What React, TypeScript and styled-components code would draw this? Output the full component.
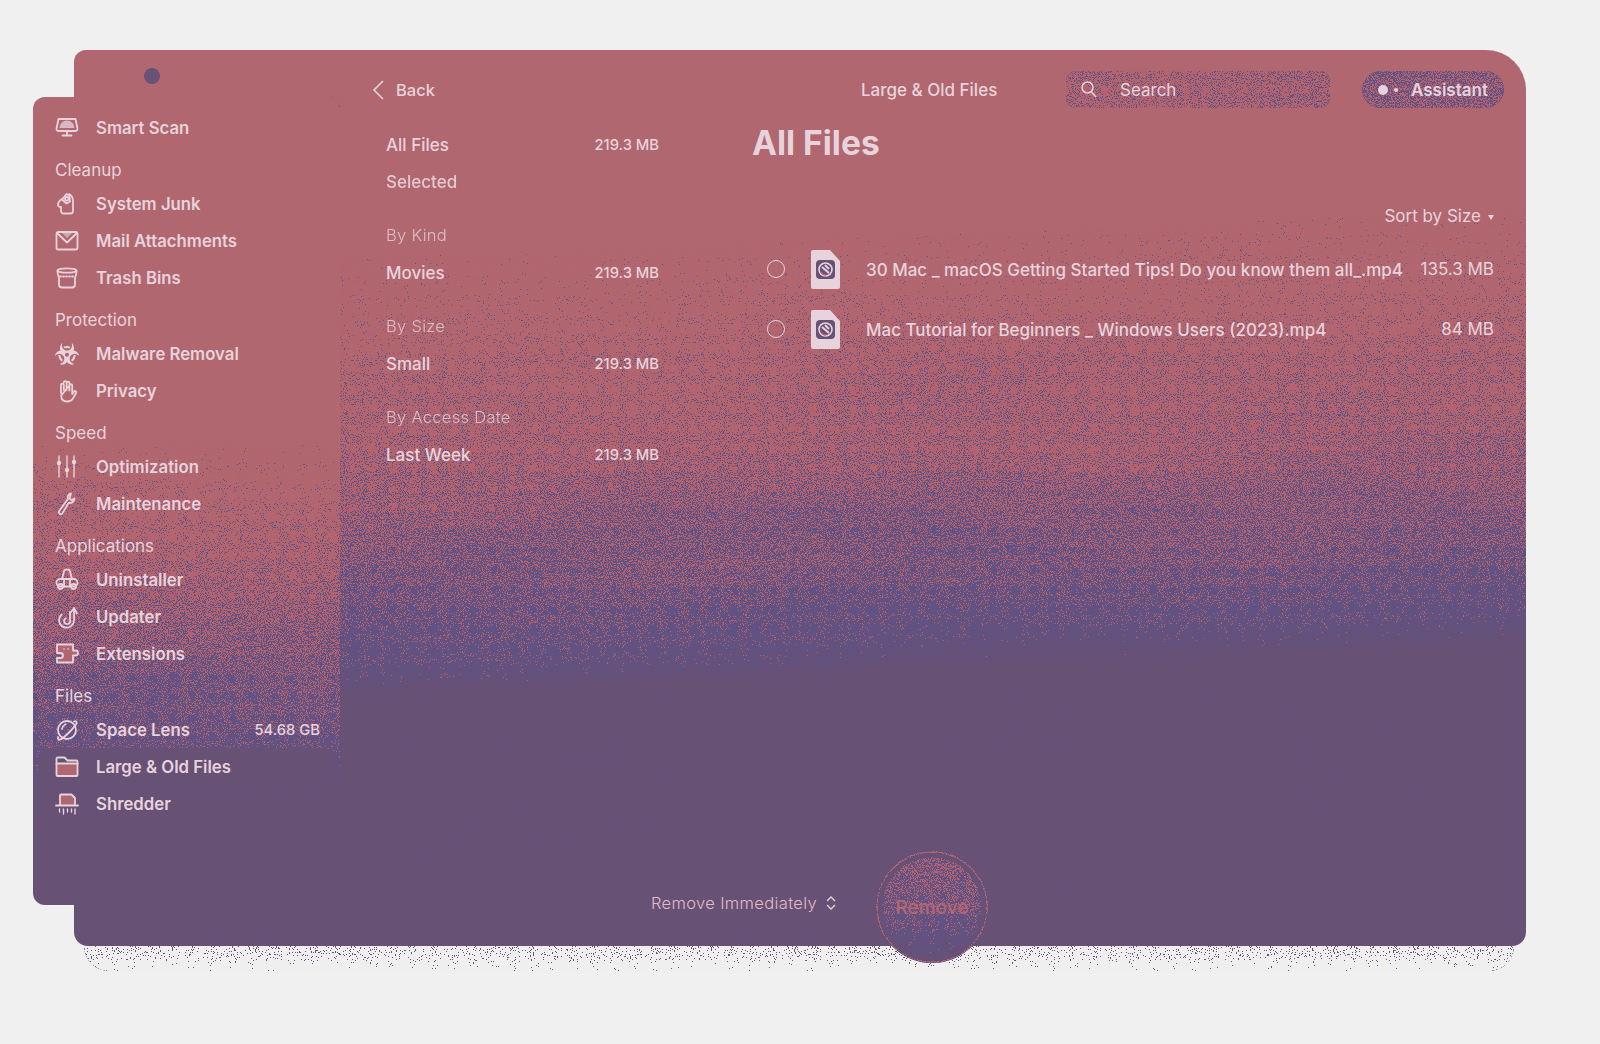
import { ReactNode } from 'react';
import styled, { createGlobalStyle, css } from 'styled-components';
import { FaBiohazard } from 'react-icons/fa';

const PINK = '#b16771';
const PURPLE = '#675175';
const LIGHT = '#e8d3dc';

const GlobalStyle = createGlobalStyle`
  html, body {
    margin: 0;
    background: #f0f0f0;
    font-family: Inter, "Noto Sans", "Liberation Sans", sans-serif;
    color: ${LIGHT};
  }
`;

// white ends up pink, black ends up purple, greys become a pixel dither of the two
const dithered = css`
  content: '';
  position: absolute;
  z-index: -1;
  filter: url(#dither);
`;

const Page = styled.div`
  width: 1600px;
  height: 1044px;
  padding: 50px 74px 0;
  box-sizing: border-box;
  overflow: hidden;
`;

const Window = styled.div`
  position: relative;
  isolation: isolate;
  display: flex;
  height: 896px;
  border-radius: 12px 40px 14px 14px;

  &::before {
    ${dithered}
    inset: 0;
    border-radius: inherit;
    background: linear-gradient(
      177.6deg,
      #fff 0,
      #fff 23%,
      #c8c8c8 23.1%,
      #a8a8a8 34%,
      #909090 46%,
      #707070 58%,
      #505050 65%,
      #343434 67.5%,
      #000 69%,
      #000 100%
    );
  }

  &::after {
    content: '';
    position: absolute;
    z-index: -2;
    left: 10px;
    right: 12px;
    top: 100%;
    height: 25px;
    border-radius: 0 0 26px 26px;
    background: linear-gradient(#a0a0a0, #c0c0c0);
    filter: url(#ditherShadow);
  }
`;

const TrafficDot = styled.span`
  position: absolute;
  left: 70px;
  top: 18px;
  width: 16px;
  height: 16px;
  border-radius: 50%;
  background: ${PURPLE};
`;

const Sidebar = styled.nav`
  position: relative;
  isolation: isolate;
  flex: none;
  width: 307px;
  margin: 47px 0 41px -41px;
  padding-top: 12px;
  box-sizing: border-box;
  border-radius: 12px;

  &::before {
    ${dithered}
    inset: 0;
    border-radius: inherit;
    background: linear-gradient(
      #fff 0,
      #fff 43%,
      #c8c8c8 43.1%,
      #a4a4a4 52%,
      #868686 64%,
      #6c6c6c 76%,
      #505050 82%,
      #343434 84%,
      #000 86%,
      #000 100%
    );
  }
`;

const GroupLabel = styled.div`
  height: 31px;
  margin-top: 8px;
  padding-left: 22px;
  font-size: 17px;
  line-height: 33px;
  font-weight: 400;
`;

const NavRow = styled.div<{ $selected?: boolean }>`
  display: flex;
  align-items: center;
  height: 37px;
  margin: 0 5px;
  padding: 0 15px 0 17px;
  border-radius: 10px;
  font-size: 16.75px;
  font-weight: 600;
  background: ${(p) => (p.$selected ? PURPLE : 'transparent')};
`;

const NavIcon = styled.svg`
  flex: none;
  width: 24px;
  height: 24px;
  margin-right: 17px;
  fill: none;
  stroke: ${LIGHT};
  stroke-width: 1.8;
  stroke-linecap: round;
  stroke-linejoin: round;
`;

const HazardIcon = styled(FaBiohazard)`
  flex: none;
  width: 24px;
  height: 24px;
  margin-right: 17px;
  color: ${LIGHT};
`;

const NavBadge = styled.span`
  margin-left: auto;
  font-size: 14.75px;
  font-weight: 500;
`;

const Middle = styled.div`
  flex: none;
  width: 393px;
  padding: 0 0 0 46px;
  box-sizing: border-box;
`;

const BackLink = styled.div`
  display: flex;
  align-items: center;
  gap: 10px;
  height: 37px;
  margin: 21px 0 0 -14px;
  font-size: 16.5px;
  font-weight: 500;
`;

const FilterList = styled.div`
  margin-top: 18px;
  width: 273px;
`;

const FilterRow = styled.div<{ $muted?: boolean }>`
  display: flex;
  justify-content: space-between;
  align-items: center;
  height: 37px;
  font-size: 17px;
  font-weight: 500;
  opacity: ${(p) => (p.$muted ? 0.9 : 1)};
`;

const FilterHeading = styled.div`
  height: 37px;
  margin-top: 17px;
  font-size: 16.5px;
  line-height: 37px;
  font-weight: 300;
  letter-spacing: 0.3px;
  opacity: 0.8;
`;

const FilterSize = styled.span`
  font-size: 14.75px;
  font-weight: 500;
`;

const Content = styled.main`
  flex: 1;
  min-width: 0;
  padding-right: 32px;
  display: flex;
  flex-direction: column;
`;

const TopBar = styled.header`
  display: flex;
  align-items: center;
  height: 37px;
  margin-top: 21px;
`;

const TopTitle = styled.div`
  flex: none;
  width: 137px;
  margin-left: 128px;
  font-size: 17px;
  font-weight: 500;
  white-space: nowrap;
`;

const SearchBox = styled.div`
  position: relative;
  isolation: isolate;
  flex: none;
  display: flex;
  align-items: center;
  gap: 23px;
  width: 264px;
  height: 37px;
  margin-left: 68px;
  padding-left: 15px;
  box-sizing: border-box;
  border-radius: 10px;
  font-size: 17px;
  font-weight: 400;

  &::before {
    ${dithered}
    inset: 0;
    border-radius: inherit;
    background: #909090;
  }
`;

const AssistantPill = styled.div`
  position: relative;
  isolation: isolate;
  flex: none;
  display: flex;
  align-items: center;
  width: 142px;
  height: 37px;
  margin-left: 32px;
  padding-left: 16px;
  box-sizing: border-box;
  border-radius: 19px;
  font-size: 17px;
  font-weight: 600;

  &::before {
    ${dithered}
    inset: 0;
    border-radius: inherit;
    background: #787878;
  }
`;

const AssistantDot = styled.span<{ $size: number; $gap: number }>`
  width: ${(p) => p.$size}px;
  height: ${(p) => p.$size}px;
  margin-right: ${(p) => p.$gap}px;
  border-radius: 50%;
  background: ${LIGHT};
`;

const Title = styled.h1`
  margin: 14px 0 0 19px;
  height: 42px;
  font-size: 33.5px;
  line-height: 42px;
  font-weight: 700;
`;

const SortRow = styled.div`
  display: flex;
  justify-content: flex-end;
  align-items: center;
  gap: 7px;
  margin-top: 40px;
  height: 24px;
  font-size: 17px;
  font-weight: 400;
`;

const Caret = styled.span`
  width: 0;
  height: 0;
  margin-top: 2px;
  border-left: 3px solid transparent;
  border-right: 3px solid transparent;
  border-top: 5px solid ${LIGHT};
`;

const FileList = styled.div`
  margin-top: 11px;
`;

const FileRow = styled.div`
  display: flex;
  align-items: center;
  height: 60px;
  margin-left: 34px;
`;

const Radio = styled.span`
  flex: none;
  width: 16px;
  height: 16px;
  border: 1.5px solid ${LIGHT};
  border-radius: 50%;
`;

const FileIcon = styled.svg`
  flex: none;
  width: 30px;
  height: 39px;
  margin: 0 25px 0 26px;
`;

const FileName = styled.span`
  flex: 1;
  min-width: 0;
  font-size: 17px;
  font-weight: 500;
  white-space: nowrap;
  margin-top: 2px;
`;

const FileSize = styled.span`
  flex: none;
  font-size: 17px;
  font-weight: 400;
`;

const Footer = styled.div`
  margin-top: auto;
  display: flex;
  align-items: center;
  height: 112px;
  margin-bottom: -17px;
  margin-left: -82px;
`;

const ModeSelect = styled.div`
  display: flex;
  align-items: center;
  gap: 9px;
  margin-top: -8px;
  font-size: 16.5px;
  font-weight: 300;
  letter-spacing: 0.35px;
  color: #e2bcc4;
`;

const RemoveButton = styled.div`
  position: relative;
  isolation: isolate;
  display: flex;
  align-items: center;
  justify-content: center;
  width: 112px;
  height: 112px;
  margin-left: 40px;
  border-radius: 50%;
  background: ${PURPLE};
  color: ${PINK};
  font-size: 19px;
  font-weight: 500;

  &::before {
    ${dithered}
    inset: 6px;
    border-radius: 50%;
    background: linear-gradient(#787878, #686868 50%, #404040 92%);
  }

  &::after {
    ${dithered}
    inset: 0;
    border-radius: 50%;
    border: 2px solid #8c8c8c;
  }
`;

function Icon({ children }: { children: ReactNode }) {
  return <NavIcon viewBox="0 0 24 24">{children}</NavIcon>;
}

const filledPink = { fill: PINK };
const filledLight = { fill: LIGHT, stroke: 'none' };

type NavItem = { label: string; icon: ReactNode; badge?: string; selected?: boolean };
type NavGroup = { title?: string; items: NavItem[] };

const groups: NavGroup[] = [
  {
    items: [
      {
        label: 'Smart Scan',
        icon: (
          <Icon>
            <path d="M3.500 3h17l2 9.500a2 2 0 0 1-2 2.500H3.500a2 2 0 0 1-2-2.500z" />
            <path d="M4.500 12a7.500 7.500 0 0 1 15 0z" style={filledLight} opacity={0.75} />
            <path d="M12 15v3.500M7.500 19.500h9" />
          </Icon>
        ),
      },
    ],
  },
  {
    title: 'Cleanup',
    items: [
      {
        label: 'System Junk',
        icon: (
          <Icon>
            <path d="M7 7C4.800 8.500 2.800 10.500 3 13c.1 1.300 1.500 2 3 2v4A2.500 2.500 0 0 0 8.500 21.500h7A2.500 2.500 0 0 0 18 19V9c0-3-1-5.500-4-7" />
            <path d="M7 7.500 11.500 2l3 2 .5 5.500-3.500 2z" />
            <circle cx="11.800" cy="6.800" r="1.800" />
          </Icon>
        ),
      },
      {
        label: 'Mail Attachments',
        icon: (
          <Icon>
            <rect x="1.500" y="3" width="21" height="17.500" rx="1.500" />
            <path d="m2 4 10 9.500L22 4" />
            <path d="M7 4h10l-5 5z" style={filledLight} opacity={0.6} />
          </Icon>
        ),
      },
      {
        label: 'Trash Bins',
        icon: (
          <Icon>
            <ellipse cx="12" cy="4.500" rx="9.500" ry="2.200" />
            <path d="M2.500 5c0 3 .5 5 1.500 6.500v7A3 3 0 0 0 7 21.500h10a3 3 0 0 0 3-3v-7c1-1.500 1.500-3.500 1.500-6.500" />
            <path d="M5 10.500h14" strokeDasharray="1 2" />
          </Icon>
        ),
      },
    ],
  },
  {
    title: 'Protection',
    items: [
      {
        label: 'Malware Removal',
        icon: <HazardIcon />,
      },
      {
        label: 'Privacy',
        icon: (
          <Icon>
            <path d="M6 14V6a1.400 1.400 0 0 1 2.800 0v5m0-7.500a1.400 1.400 0 0 1 2.800 0v7.500m0-7a1.400 1.400 0 0 1 2.800 0v7.500m0-5a1.400 1.400 0 0 1 2.800 0V15l1.800-2.500c1.200-1.200 2.700 0 2 1.500l-3 5.500c-1.500 2.300-3.500 3-6 3-4 0-5.800-2.500-5.800-6z" />
          </Icon>
        ),
      },
    ],
  },
  {
    title: 'Speed',
    items: [
      {
        label: 'Optimization',
        icon: (
          <Icon>
            <path d="M4 1v21M12 1v21M19 1v21" strokeWidth={1.400} />
            <circle cx="4" cy="8" r="2.200" style={filledLight} />
            <circle cx="12" cy="15" r="2.200" style={filledLight} />
            <circle cx="19" cy="7" r="2.200" style={filledLight} />
          </Icon>
        ),
      },
      {
        label: 'Maintenance',
        icon: (
          <Icon>
            <path d="M16 1.500c-2.500.5-4 3-3 5.500L4.500 18.500c-1 1.500-.8 2.800.2 3.400 1 .6 2.200.2 3-1l5.800-9.900c3 .2 5.500-1.500 6-4.500l-3 1.500-2-1.500z" />
          </Icon>
        ),
      },
    ],
  },
  {
    title: 'Applications',
    items: [
      {
        label: 'Uninstaller',
        icon: (
          <Icon>
            <path d="M9 3.500a3 2 0 0 1 6 0l2 7.500H7z" />
            <rect x="1.500" y="11" width="21" height="7.500" rx="3.700" />
            <circle cx="5.500" cy="18.500" r="2.500" />
            <circle cx="18.500" cy="18.500" r="2.500" />
            <path d="M9 11v7.500M15 11v7.500" />
          </Icon>
        ),
      },
      {
        label: 'Updater',
        icon: (
          <Icon>
            <path d="M6.500 9.500A7.500 7.500 0 1 0 19 14V5" />
            <path d="m15 8.500 4-5.500 3 5.500" />
            <path d="M10.500 13.500a3 3 0 1 0 4.500 1.500V7" />
          </Icon>
        ),
      },
      {
        label: 'Extensions',
        icon: (
          <Icon>
            <path d="M2 2.500h16v6h2.500a2.500 2.500 0 0 1 0 5H18v7H2V16h3.500a2.500 2.500 0 0 0 0-5H2z" style={filledPink} />
            <circle cx="9" cy="7" r="0.800" style={filledLight} />
            <circle cx="13" cy="7" r="0.800" style={filledLight} />
          </Icon>
        ),
      },
    ],
  },
  {
    title: 'Files',
    items: [
      {
        label: 'Space Lens',
        badge: '54.68 GB',
        icon: (
          <Icon>
            <circle cx="12" cy="12" r="9" />
            <path d="M19 3.500c2-1 3 0 2.500 2C19 10 10 19 5.500 21.500c-2 .8-3-.5-2.500-2.500" />
            <path d="M7 11a6 6 0 0 1 5-5" strokeDasharray="1 1.500" />
          </Icon>
        ),
      },
      {
        label: 'Large & Old Files',
        selected: true,
        icon: (
          <Icon>
            <path d="M1.500 6V3.500a1 1 0 0 1 1-1h7l3 3h9a1 1 0 0 1 1 1V9H1.500z" />
            <path d="M1.500 8.500h21V20a1 1 0 0 1-1 1h-19a1 1 0 0 1-1-1z" style={filledPink} />
          </Icon>
        ),
      },
      {
        label: 'Shredder',
        icon: (
          <Icon>
            <path d="M5 13V3.500a1 1 0 0 1 1-1h10.500L20 6v7" style={filledPink} />
            <path d="M1 13.500h22" />
            <path d="M4.500 17v3M8.500 17v5M12.500 17v3M16.500 17v3M20 17v5" strokeWidth={1.400} />
          </Icon>
        ),
      },
    ],
  },
];

const files = [
  { name: '30 Mac _ macOS Getting Started Tips! Do you know them all_.mp4', size: '135.3 MB' },
  { name: 'Mac Tutorial for Beginners _ Windows Users (2023).mp4', size: '84 MB' },
];

function MovieFile() {
  return (
    <FileIcon viewBox="0 0 30 39">
      <path d="M2 0h17l10 11v26a2 2 0 0 1-2 2H2a2 2 0 0 1-2-2V2a2 2 0 0 1 2-2z" fill={LIGHT} />
      <rect x="5" y="10" width="19" height="19" rx="4" fill={PURPLE} />
      <circle cx="14.500" cy="19.500" r="6.500" fill="none" stroke={LIGHT} strokeWidth="1.600" />
      <path d="m11 17 7 6M14 15l4 4" stroke={LIGHT} strokeWidth="2" />
      <path d="M10 22c1 2 3 3 5 3" stroke={PINK} strokeWidth="1.400" fill="none" />
    </FileIcon>
  );
}

const grayOpaque = '1 0 0 0 0  1 0 0 0 0  1 0 0 0 0  0 0 0 0 1';

export default function App() {
  return (
    <>
      <GlobalStyle />
      <svg width="0" height="0" aria-hidden="true" style={{ position: 'absolute' }}>
        <defs>
          <filter id="dither" x="0" y="0" width="1" height="1" colorInterpolationFilters="sRGB">
            <feTurbulence type="fractalNoise" baseFrequency="0.95" numOctaves="2" seed="7" />
            <feColorMatrix type="matrix" values={grayOpaque} result="fine" />
            <feTurbulence type="fractalNoise" baseFrequency="0.003 0.014" numOctaves="2" seed="11" />
            <feColorMatrix type="matrix" values={grayOpaque} result="bands" />
            <feComposite in="fine" in2="bands" operator="arithmetic" k1="0" k2="1" k3="0.12" k4="-0.06" result="noise" />
            <feComposite in="SourceGraphic" in2="noise" operator="arithmetic" k1="0" k2="1" k3="1" k4="-0.5" result="mixed" />
            {/* table steps: purple, dither blue, dither red, plain pink */}
            <feComponentTransfer in="mixed" result="hard">
              <feFuncR type="discrete" tableValues="0.404 0.404 0.380 0.380 0.710 0.694 0.694 0.694" />
              <feFuncG type="discrete" tableValues="0.318 0.318 0.325 0.325 0.380 0.404 0.404 0.404" />
              <feFuncB type="discrete" tableValues="0.459 0.459 0.520 0.520 0.430 0.443 0.443 0.443" />
              <feFuncA type="linear" slope="0" intercept="1" />
            </feComponentTransfer>
            <feComposite in="hard" in2="SourceAlpha" operator="in" />
          </filter>
          <filter id="ditherShadow" x="0" y="0" width="1" height="1" colorInterpolationFilters="sRGB">
            <feTurbulence type="fractalNoise" baseFrequency="0.95" numOctaves="2" seed="3" />
            <feColorMatrix type="matrix" values={grayOpaque} result="noise" />
            <feComposite in="SourceGraphic" in2="noise" operator="arithmetic" k1="0" k2="1" k3="1" k4="-0.5" result="mixed" />
            <feComponentTransfer in="mixed" result="hard">
              <feFuncR type="discrete" tableValues="0.404 0.941" />
              <feFuncG type="discrete" tableValues="0.318 0.941" />
              <feFuncB type="discrete" tableValues="0.459 0.941" />
              <feFuncA type="linear" slope="0" intercept="1" />
            </feComponentTransfer>
            <feComposite in="hard" in2="SourceAlpha" operator="in" />
          </filter>
        </defs>
      </svg>
      <Page>
        <Window>
          <TrafficDot />
          <Sidebar>
            {groups.map((group, i) => (
              <div key={i}>
                {group.title && <GroupLabel>{group.title}</GroupLabel>}
                {group.items.map((item) => (
                  <NavRow key={item.label} $selected={item.selected}>
                    {item.icon}
                    {item.label}
                    {item.badge && <NavBadge>{item.badge}</NavBadge>}
                  </NavRow>
                ))}
              </div>
            ))}
          </Sidebar>
          <Middle>
            <BackLink>
              <svg width="14" height="20" viewBox="0 0 14 20" fill="none" stroke={LIGHT} strokeWidth="1.600">
                <path d="M11 1 2 10l9 9" />
              </svg>
              Back
            </BackLink>
            <FilterList>
              <FilterRow>
                All Files
                <FilterSize>219.3 MB</FilterSize>
              </FilterRow>
              <FilterRow $muted>Selected</FilterRow>
              <FilterHeading>By Kind</FilterHeading>
              <FilterRow>
                Movies
                <FilterSize>219.3 MB</FilterSize>
              </FilterRow>
              <FilterHeading>By Size</FilterHeading>
              <FilterRow>
                Small
                <FilterSize>219.3 MB</FilterSize>
              </FilterRow>
              <FilterHeading>By Access Date</FilterHeading>
              <FilterRow>
                Last Week
                <FilterSize>219.3 MB</FilterSize>
              </FilterRow>
            </FilterList>
          </Middle>
          <Content>
            <TopBar>
              <TopTitle>Large &amp; Old Files</TopTitle>
              <SearchBox>
                <svg width="16" height="17" viewBox="0 0 16 17" fill="none" stroke={LIGHT} strokeWidth="1.500">
                  <circle cx="6.500" cy="6.500" r="5.500" />
                  <path d="m10.500 11 4.500 5" />
                </svg>
                Search
              </SearchBox>
              <AssistantPill>
                <AssistantDot $size={10} $gap={6} />
                <AssistantDot $size={4} $gap={13} />
                Assistant
              </AssistantPill>
            </TopBar>
            <Title>All Files</Title>
            <SortRow>
              Sort by Size
              <Caret />
            </SortRow>
            <FileList>
              {files.map((file) => (
                <FileRow key={file.name}>
                  <Radio />
                  <MovieFile />
                  <FileName>{file.name}</FileName>
                  <FileSize>{file.size}</FileSize>
                </FileRow>
              ))}
            </FileList>
            <Footer>
              <ModeSelect>
                Remove Immediately
                <svg width="10" height="14" viewBox="0 0 10 14" fill="none" stroke={LIGHT} strokeWidth="1.300">
                  <path d="m1 5 4-4 4 4M1 9l4 4 4-4" />
                </svg>
              </ModeSelect>
              <RemoveButton>Remove</RemoveButton>
            </Footer>
          </Content>
        </Window>
      </Page>
    </>
  );
}
